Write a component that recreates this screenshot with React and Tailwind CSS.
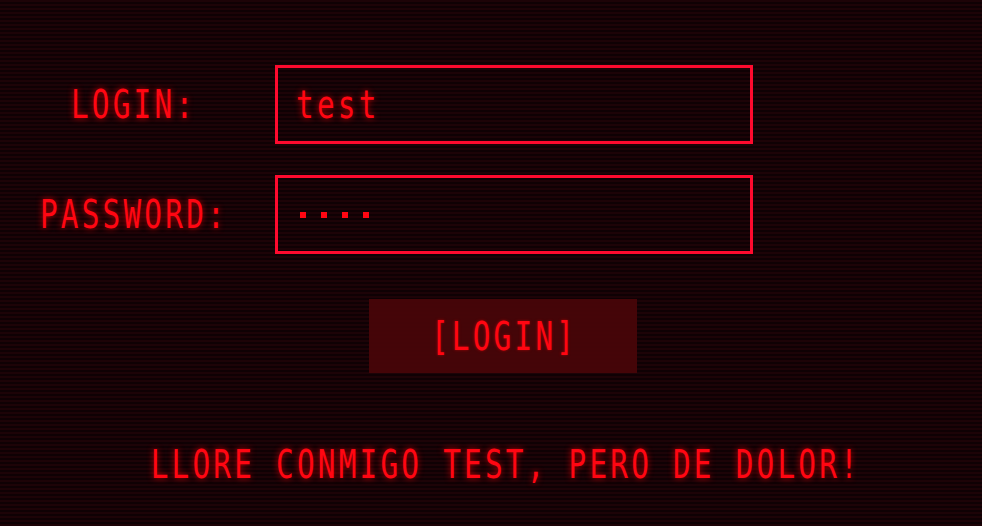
import React from 'react';

const glow = '[text-shadow:0_0_6px_rgba(255,0,0,0.75)]';
// condensed look: DejaVu Sans Mono squeezed horizontally, stretched vertically
const txt = 'inline-block scale-x-[0.84] scale-y-[1.14] text-[35px] leading-none tracking-[3.8px] text-[#ff0612]';

function Label({ children }) {
    return (
        <div className="flex items-center justify-center pl-[5px]">
            <span className={`${txt} ${glow}`}>{children}</span>
        </div>
    );
}

export default function App() {
    return (
        <div
            className="min-h-[526px] w-full bg-[repeating-linear-gradient(to_bottom,#1d0307_0px,#1d0307_2px,#0f0104_2px,#0f0104_4px)] pt-[65px] font-['DejaVu_Sans_Mono',monospace]"
        >
            <div className="grid grid-cols-[262px_478px] gap-x-[13px] gap-y-[31px]">
                <Label>LOGIN:</Label>
                <div className="flex h-[79px] items-center border-[3px] border-[#ff0a2e] pl-[18px]">
                    <span className={`${txt} origin-left ${glow}`}>test</span>
                </div>
                <Label>PASSWORD:</Label>
                <div className="flex h-[79px] items-center border-[3px] border-[#ff0a2e] pl-[22px]">
                    <span className="flex gap-[15px]">
                        <span className="h-[6px] w-[6px] bg-[#ff0612]" />
                        <span className="h-[6px] w-[6px] bg-[#ff0612]" />
                        <span className="h-[6px] w-[6px] bg-[#ff0612]" />
                        <span className="h-[6px] w-[6px] bg-[#ff0612]" />
                    </span>
                </div>
            </div>

            <button className="ml-[369px] mt-[45px] flex h-[74px] w-[268px] items-center justify-center bg-[#4a0509]/90 pl-[3px]">
                <span className={`${txt} [text-shadow:0_0_3px_rgba(255,0,0,0.5)]`}>[LOGIN]</span>
            </button>

            <div className="mt-[74px] flex justify-center pl-[30px]">
                <span className={`${txt} ${glow}`}>LLORE CONMIGO TEST, PERO DE DOLOR!</span>
            </div>
        </div>
    );
}
